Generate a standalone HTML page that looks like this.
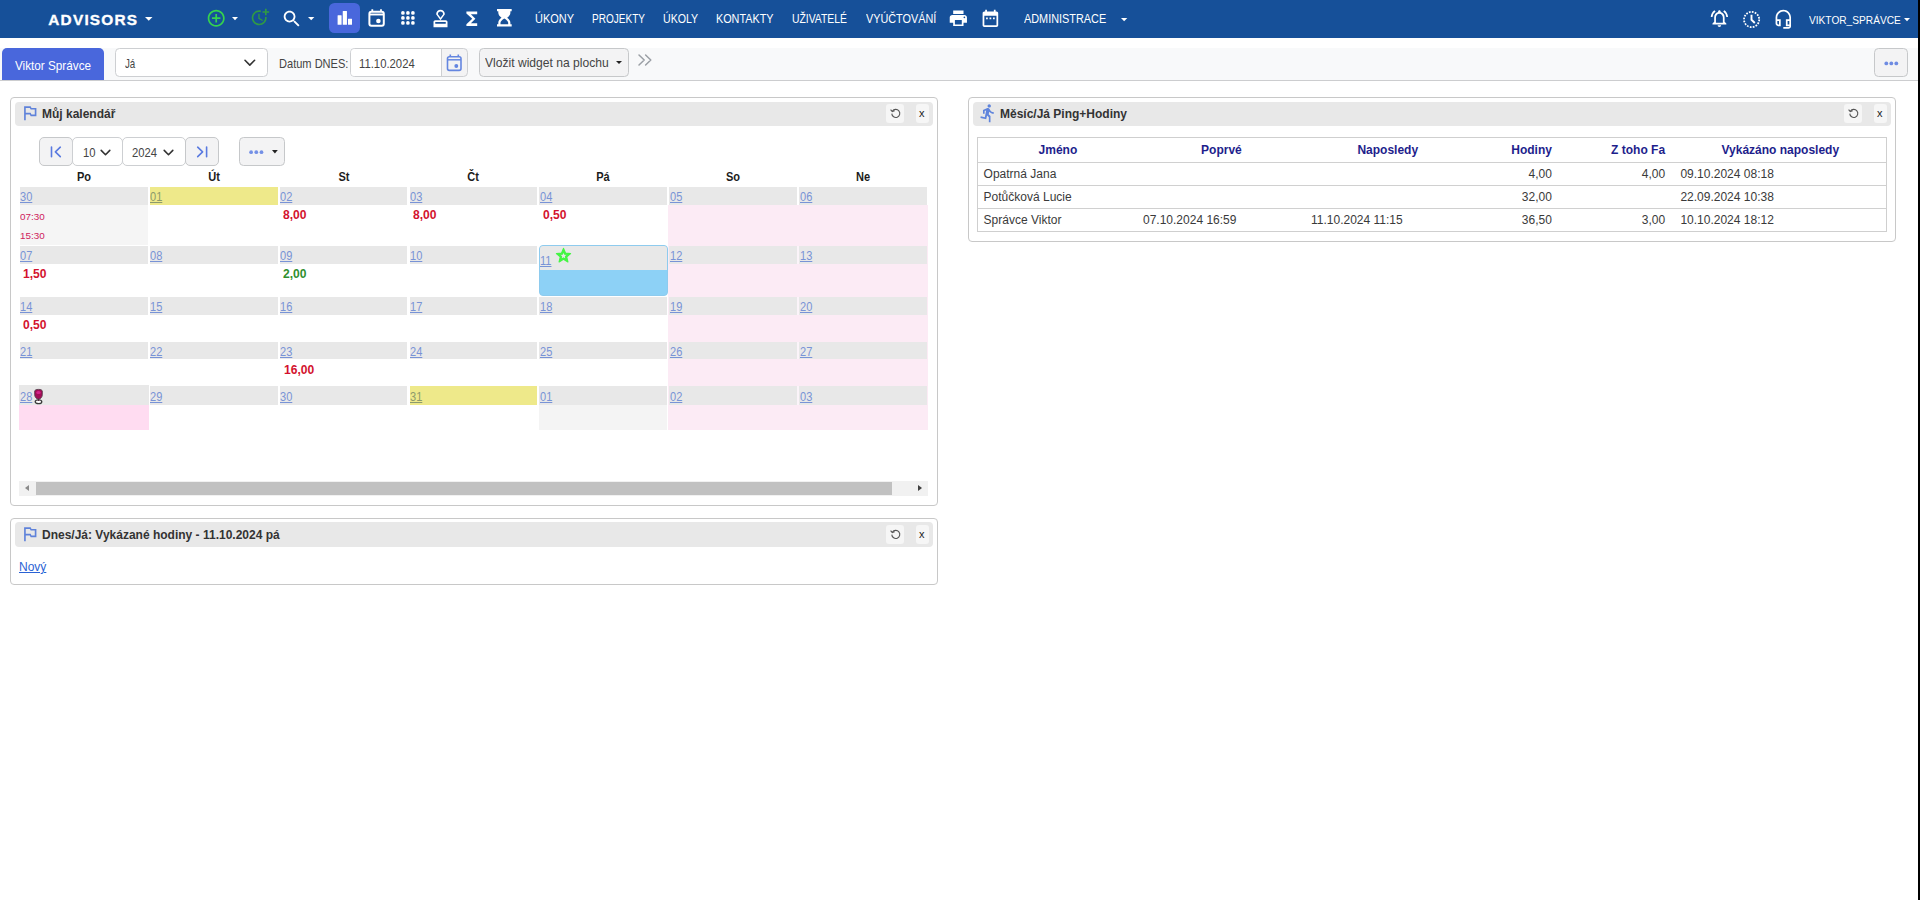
<!DOCTYPE html>
<html lang="cs">
<head>
<meta charset="utf-8">
<title>ADVISORS</title>
<style>
*{box-sizing:border-box;margin:0;padding:0}
html,body{width:1920px;height:900px;overflow:hidden;background:#fff}
body{position:relative;font-family:"Liberation Sans",sans-serif;font-size:12px;color:#212529}
.abs{position:absolute}
.t{position:absolute;white-space:nowrap;line-height:1}
svg{position:absolute;display:block;overflow:visible}
/* right black strip */
#strip{left:1918px;top:0;width:2px;height:900px;background:#000;z-index:50}
/* navbar */
#nav{left:0;top:0;width:1918px;height:38px;background:#165099}
#nav .t{color:#fff}
.brand{font-weight:bold;font-size:15.400px;letter-spacing:1.200px;-webkit-text-stroke:.35px #fff}
.mi{font-size:12px;transform-origin:0 0}
.caret{position:absolute;width:0;height:0;border-left:3.5px solid transparent;border-right:3.5px solid transparent;border-top:4px solid #fff}
#active{left:328.7px;top:3px;width:31.6px;height:29.6px;border-radius:5.500px;background:#4967dc}
/* toolbar */
#tb{left:0;top:48px;width:1918px;height:33px;background:#f8f9fa;border-bottom:1px solid #cccdcf}
#tab{left:2px;top:48.300px;width:102px;height:32px;background:#4967dc;border-radius:5px 5px 0 0}
.inp{position:absolute;background:#fff;border:1px solid #cdcfd2;border-radius:4.500px}
.btn{position:absolute;background:#f3f3f4;border:1px solid #c6c8ca;border-radius:4.500px}
.tt{font-size:12.8px;color:#444;transform-origin:0 0}
/* widgets */
.w{position:absolute;border:1px solid #c8c8c8;border-radius:4px;background:#fff}
.wh{position:absolute;background:#e8e8e8;border-radius:4px}
.wt{font-weight:bold;font-size:12px;color:#333}
.wb{position:absolute;background:#f6f6f6;border-radius:3px}
</style>
</head>
<body>
<div id="strip" class="abs"></div>

<!-- NAVBAR -->
<div id="nav" class="abs">
  <div id="active" class="abs"></div>
  <span class="t brand" style="left:48.300px;top:11.800px">ADVISORS</span>
  <span class="t mi" style="left:534.5px;top:12.5px;transform:scaleX(0.914)">ÚKONY</span>
  <span class="t mi" style="left:591.7px;top:12.5px;transform:scaleX(0.836)">PROJEKTY</span>
  <span class="t mi" style="left:662.8px;top:12.5px;transform:scaleX(0.884)">ÚKOLY</span>
  <span class="t mi" style="left:715.8px;top:12.5px;transform:scaleX(0.901)">KONTAKTY</span>
  <span class="t mi" style="left:792px;top:12.5px;transform:scaleX(0.865)">UŽIVATELÉ</span>
  <span class="t mi" style="left:866px;top:12.5px;transform:scaleX(0.903)">VYÚČTOVÁNÍ</span>
  <span class="t mi" style="left:1023.75px;top:12.5px;transform:scaleX(0.907)">ADMINISTRACE</span>
  <span class="t mi" style="left:1808.750px;top:13.700px;font-size:11.600px;transform:scaleX(.876)">VIKTOR_SPRÁVCE</span>
</div>

<!-- TOOLBAR -->
<div id="tb" class="abs"></div>
<div id="tab" class="abs"><span class="t tt" style="left:13px;top:12px;color:#fff;transform:scaleX(.916)">Viktor Správce</span></div>
<div class="inp" style="left:115px;top:48px;width:152.5px;height:28.5px"><span class="t tt" style="left:9.4px;top:8.6px;transform:scaleX(.76)">Já</span></div>
<span class="t tt" style="left:278.8px;top:57.9px;transform:scaleX(.864)">Datum DNES:</span>
<div class="inp" style="left:349.500px;top:48px;width:118.300px;height:28.500px;background:#f3f3f4"><div class="abs" style="left:0;top:0;width:91px;height:26.500px;background:#fff;border-right:1px solid #cdcfd2;border-radius:3.500px 0 0 3.500px"></div><span class="t tt" style="left:8.5px;top:8.9px;transform:scaleX(.883)">11.10.2024</span></div>
<div class="btn" style="left:478.7px;top:48px;width:150px;height:28.5px"><span class="t tt" style="left:5.7px;top:8.4px;transform:scaleX(.945)">Vložit widget na plochu</span></div>
<div class="btn" style="left:1874px;top:48px;width:33.5px;height:28.5px"></div>

<!-- WIDGET 1: calendar -->
<div class="w" style="left:10px;top:97px;width:928px;height:409px"></div>
<div class="wh" style="left:15px;top:102px;width:918px;height:24px"></div>
<span class="t wt" style="left:42px;top:108px">Můj kalendář</span>
<div class="wb" style="left:886px;top:104px;width:18px;height:19px"></div>
<div class="wb" style="left:916px;top:104px;width:13px;height:19px"></div>
<span class="t" style="left:919px;top:108px;font-size:11px;color:#222">x</span>

<!--CAL-->
<style>
.dh{position:absolute;background:#e8e8e8;height:18px}
.db{position:absolute}
.dn{font-size:12px;color:#7893d6;text-decoration:underline;text-decoration-thickness:1px;text-underline-offset:.6px;transform:scaleX(.92);transform-origin:0 0}
.wd{font-weight:bold;font-size:12px;color:#1c1c1c;transform-origin:50% 0}
.hr{font-weight:bold;font-size:12.600px;color:#d3122e;transform:scaleX(.960);transform-origin:0 0}
.tm{font-size:9.700px;color:#cf1b5c;transform:scaleX(1.020);transform-origin:0 0}
</style>
<div class="btn" style="left:39px;top:137px;width:34px;height:28.500px;border-radius:5px"></div>
<div class="inp" style="left:72px;top:137px;width:51px;height:28.500px;border-radius:5px"><span class="t tt" style="left:9.500px;top:9px;font-size:12.500px;transform:scaleX(.9);transform-origin:0 0">10</span></div>
<div class="inp" style="left:122px;top:137px;width:64px;height:28.500px;border-radius:5px"><span class="t tt" style="left:9.400px;top:9px;font-size:12.500px;transform:scaleX(.9);transform-origin:0 0">2024</span></div>
<div class="btn" style="left:185px;top:137px;width:34px;height:28.500px;border-radius:5px"></div>
<div class="btn" style="left:239px;top:137px;width:46px;height:28.500px"></div>
<span class="t wd" style="left:63.8px;top:170.500px;width:40px;text-align:center;transform:scaleX(.92)">Po</span>
<span class="t wd" style="left:193.6px;top:170.500px;width:40px;text-align:center;transform:scaleX(.92)">Út</span>
<span class="t wd" style="left:323.6px;top:170.500px;width:40px;text-align:center;transform:scaleX(.92)">St</span>
<span class="t wd" style="left:453.4px;top:170.500px;width:40px;text-align:center;transform:scaleX(.92)">Čt</span>
<span class="t wd" style="left:583.4px;top:170.500px;width:40px;text-align:center;transform:scaleX(.92)">Pá</span>
<span class="t wd" style="left:713.2px;top:170.500px;width:40px;text-align:center;transform:scaleX(.92)">So</span>
<span class="t wd" style="left:843.2px;top:170.500px;width:40px;text-align:center;transform:scaleX(.92)">Ne</span>
<div class="db" style="left:668px;top:204.8px;width:259.700px;height:225.200px;background:#fcebf5"></div>
<div class="db" style="left:19.8px;top:204.8px;width:127.9px;height:40.5px;background:#f5f5f5"></div>
<div class="dh" style="left:19.8px;top:186.8px;width:127.9px;height:18.2px;background:#e8e8e8"></div>
<span class="t dn" style="left:20.2px;top:191.0px">30</span>
<div class="dh" style="left:149.7px;top:186.8px;width:127.9px;height:18.2px;background:#eee98a"></div>
<span class="t dn" style="left:150.1px;top:191.0px;color:#8c9a6c">01</span>
<div class="dh" style="left:279.6px;top:186.8px;width:127.9px;height:18.2px;background:#e8e8e8"></div>
<span class="t dn" style="left:280.0px;top:191.0px">02</span>
<span class="t hr" style="left:282.8px;top:209.2px">8,00</span>
<div class="dh" style="left:409.5px;top:186.8px;width:127.9px;height:18.2px;background:#e8e8e8"></div>
<span class="t dn" style="left:409.9px;top:191.0px">03</span>
<span class="t hr" style="left:412.7px;top:209.2px">8,00</span>
<div class="dh" style="left:539.4px;top:186.8px;width:127.9px;height:18.2px;background:#e8e8e8"></div>
<span class="t dn" style="left:539.8px;top:191.0px">04</span>
<span class="t hr" style="left:542.6px;top:209.2px">0,50</span>
<div class="dh" style="left:669.3px;top:186.8px;width:127.9px;height:18.2px;background:#e8e8e8"></div>
<span class="t dn" style="left:669.7px;top:191.0px">05</span>
<div class="dh" style="left:799.2px;top:186.8px;width:127.9px;height:18.2px;background:#e8e8e8"></div>
<span class="t dn" style="left:799.6px;top:191.0px">06</span>
<div class="db" style="left:797px;top:246.0px;width:2px;height:17.8px;background:#fbf4f9"></div>
<div class="dh" style="left:19.8px;top:246.0px;width:127.9px;height:17.8px;background:#e8e8e8"></div>
<span class="t dn" style="left:20.2px;top:250.2px">07</span>
<span class="t hr" style="left:23.0px;top:268.4px">1,50</span>
<div class="dh" style="left:149.7px;top:246.0px;width:127.9px;height:17.8px;background:#e8e8e8"></div>
<span class="t dn" style="left:150.1px;top:250.2px">08</span>
<div class="dh" style="left:279.6px;top:246.0px;width:127.9px;height:17.8px;background:#e8e8e8"></div>
<span class="t dn" style="left:280.0px;top:250.2px">09</span>
<span class="t hr" style="left:282.8px;top:268.4px;color:#2f8f2f">2,00</span>
<div class="dh" style="left:409.5px;top:246.0px;width:127.9px;height:17.8px;background:#e8e8e8"></div>
<span class="t dn" style="left:409.9px;top:250.2px">10</span>
<div class="db" style="left:538.8px;top:244.5px;width:129.4px;height:51px;background:#8dd1f6;border-radius:4px;overflow:hidden;border:1px solid #8ecbee"><div style="height:24px;background:#e8e8e8"></div></div>
<span class="t dn" style="left:539.8px;top:254.8px">11</span>
<div class="dh" style="left:669.3px;top:246.0px;width:127.9px;height:17.8px;background:#e8e8e8"></div>
<span class="t dn" style="left:669.7px;top:250.2px">12</span>
<div class="dh" style="left:799.2px;top:246.0px;width:127.9px;height:17.8px;background:#e8e8e8"></div>
<span class="t dn" style="left:799.6px;top:250.2px">13</span>
<div class="db" style="left:797px;top:296.8px;width:2px;height:17.8px;background:#fbf4f9"></div>
<div class="dh" style="left:19.8px;top:296.8px;width:127.9px;height:17.8px;background:#e8e8e8"></div>
<span class="t dn" style="left:20.2px;top:301.0px">14</span>
<span class="t hr" style="left:23.0px;top:319.2px">0,50</span>
<div class="dh" style="left:149.7px;top:296.8px;width:127.9px;height:17.8px;background:#e8e8e8"></div>
<span class="t dn" style="left:150.1px;top:301.0px">15</span>
<div class="dh" style="left:279.6px;top:296.8px;width:127.9px;height:17.8px;background:#e8e8e8"></div>
<span class="t dn" style="left:280.0px;top:301.0px">16</span>
<div class="dh" style="left:409.5px;top:296.8px;width:127.9px;height:17.8px;background:#e8e8e8"></div>
<span class="t dn" style="left:409.9px;top:301.0px">17</span>
<div class="dh" style="left:539.4px;top:296.8px;width:127.9px;height:17.8px;background:#e8e8e8"></div>
<span class="t dn" style="left:539.8px;top:301.0px">18</span>
<div class="dh" style="left:669.3px;top:296.8px;width:127.9px;height:17.8px;background:#e8e8e8"></div>
<span class="t dn" style="left:669.7px;top:301.0px">19</span>
<div class="dh" style="left:799.2px;top:296.8px;width:127.9px;height:17.8px;background:#e8e8e8"></div>
<span class="t dn" style="left:799.6px;top:301.0px">20</span>
<div class="db" style="left:797px;top:341.8px;width:2px;height:17.6px;background:#fbf4f9"></div>
<div class="dh" style="left:19.8px;top:341.8px;width:127.9px;height:17.6px;background:#e8e8e8"></div>
<span class="t dn" style="left:20.2px;top:346.0px">21</span>
<div class="dh" style="left:149.7px;top:341.8px;width:127.9px;height:17.6px;background:#e8e8e8"></div>
<span class="t dn" style="left:150.1px;top:346.0px">22</span>
<div class="dh" style="left:279.6px;top:341.8px;width:127.9px;height:17.6px;background:#e8e8e8"></div>
<span class="t dn" style="left:280.0px;top:346.0px">23</span>
<span class="t hr" style="left:283.8px;top:364.2px">16,00</span>
<div class="dh" style="left:409.5px;top:341.8px;width:127.9px;height:17.6px;background:#e8e8e8"></div>
<span class="t dn" style="left:409.9px;top:346.0px">24</span>
<div class="dh" style="left:539.4px;top:341.8px;width:127.9px;height:17.6px;background:#e8e8e8"></div>
<span class="t dn" style="left:539.8px;top:346.0px">25</span>
<div class="dh" style="left:669.3px;top:341.8px;width:127.9px;height:17.6px;background:#e8e8e8"></div>
<span class="t dn" style="left:669.7px;top:346.0px">26</span>
<div class="dh" style="left:799.2px;top:341.8px;width:127.9px;height:17.6px;background:#e8e8e8"></div>
<span class="t dn" style="left:799.6px;top:346.0px">27</span>
<div class="db" style="left:797px;top:385.8px;width:2px;height:19.0px;background:#fbf4f9"></div>
<div class="db" style="left:19.00px;top:385.40000000000003px;width:129.70px;height:44.6px;background:#ffdcf1"></div>
<div class="dh" style="left:19.00px;top:385.40000000000003px;width:129.70px;height:19.4px;background:#e8e8e8"></div>
<span class="t dn" style="left:20.2px;top:390.7px">28</span>
<div class="dh" style="left:149.7px;top:385.8px;width:127.9px;height:19.0px;background:#e8e8e8"></div>
<span class="t dn" style="left:150.1px;top:390.7px">29</span>
<div class="dh" style="left:279.6px;top:385.8px;width:127.9px;height:19.0px;background:#e8e8e8"></div>
<span class="t dn" style="left:280.0px;top:390.7px">30</span>
<div class="dh" style="left:409.5px;top:385.8px;width:127.9px;height:19.0px;background:#eee98a"></div>
<span class="t dn" style="left:409.9px;top:390.7px;color:#8c9a6c">31</span>
<div class="db" style="left:539.4px;top:404.6px;width:127.9px;height:25.4px;background:#f4f4f4"></div>
<div class="dh" style="left:539.4px;top:385.8px;width:127.9px;height:19.0px;background:#e8e8e8"></div>
<span class="t dn" style="left:539.8px;top:390.7px">01</span>
<div class="dh" style="left:669.3px;top:385.8px;width:127.9px;height:19.0px;background:#e8e8e8"></div>
<span class="t dn" style="left:669.7px;top:390.7px">02</span>
<div class="dh" style="left:799.2px;top:385.8px;width:127.9px;height:19.0px;background:#e8e8e8"></div>
<span class="t dn" style="left:799.6px;top:390.7px">03</span>
<span class="t tm" style="left:20.2px;top:211.6px">07:30</span>
<span class="t tm" style="left:20.2px;top:230.8px">15:30</span>
<div class="abs" style="left:19px;top:481px;width:909px;height:15px;background:#f1f1f1"></div>
<div class="abs" style="left:36px;top:481.5px;width:856px;height:13px;background:#c1c1c1"></div>
<i class="abs" style="left:24.5px;top:484.5px;width:0;height:0;border-top:3.5px solid transparent;border-bottom:3.5px solid transparent;border-right:4px solid #8a8a8a"></i>
<i class="abs" style="left:917.5px;top:484.5px;width:0;height:0;border-top:3.5px solid transparent;border-bottom:3.5px solid transparent;border-left:4px solid #404040"></i>
<!--/CAL-->

<!-- WIDGET 2 -->
<div class="w" style="left:10px;top:518px;width:928px;height:67px"></div>
<div class="wh" style="left:15px;top:522px;width:918px;height:25px"></div>
<span class="t wt" style="left:42px;top:529px">Dnes/Já: Vykázané hodiny - 11.10.2024 pá</span>
<div class="wb" style="left:886px;top:525px;width:18px;height:19px"></div>
<div class="wb" style="left:916px;top:525px;width:13px;height:19px"></div>
<span class="t" style="left:919px;top:529px;font-size:11px;color:#222">x</span>
<span class="t" style="left:19px;top:561px;font-size:12px;color:#2a62d4;text-decoration:underline">Nový</span>

<!-- WIDGET 3 -->
<div class="w" style="left:968px;top:97px;width:928px;height:145px"></div>
<div class="wh" style="left:973px;top:102px;width:918px;height:24px"></div>
<span class="t wt" style="left:1000px;top:108px">Měsíc/Já Ping+Hodiny</span>
<div class="wb" style="left:1844px;top:104px;width:18px;height:19px"></div>
<div class="wb" style="left:1874px;top:104px;width:13px;height:19px"></div>
<span class="t" style="left:1877px;top:108px;font-size:11px;color:#222">x</span>

<!--TABLE-->
<style>
.th{font-weight:bold;font-size:12px;color:#1e1e8c}
.td{font-size:12px;color:#3a3a3a}
.ln{position:absolute;background:#d0d0d0}
</style>
<div class="abs" style="left:977px;top:137px;width:910px;height:95px;border:1px solid #cfcfcf"></div>
<div class="ln" style="left:978px;top:162px;width:908px;height:1px"></div>
<div class="ln" style="left:978px;top:185px;width:908px;height:1px"></div>
<div class="ln" style="left:978px;top:208px;width:908px;height:1px"></div>
<span class="t th" style="left:957.9000000000001px;top:143.6px;width:200px;text-align:center">Jméno</span>
<span class="t th" style="left:1121.4px;top:143.6px;width:200px;text-align:center">Poprvé</span>
<span class="t th" style="left:1287.75px;top:143.6px;width:200px;text-align:center">Naposledy</span>
<span class="t th" style="left:1351.9px;top:143.6px;width:200px;text-align:right">Hodiny</span>
<span class="t th" style="left:1465.1px;top:143.6px;width:200px;text-align:right">Z toho Fa</span>
<span class="t th" style="left:1680.3px;top:143.6px;width:200px;text-align:center">Vykázáno naposledy</span>
<span class="t td" style="left:983.6px;top:167.7px">Opatrná Jana</span>
<span class="t td" style="left:1351.9px;top:167.7px;width:200px;text-align:right">4,00</span>
<span class="t td" style="left:1465.1px;top:167.7px;width:200px;text-align:right">4,00</span>
<span class="t td" style="left:1680.4px;top:167.7px">09.10.2024 08:18</span>
<span class="t td" style="left:983.6px;top:190.6px">Potůčková Lucie</span>
<span class="t td" style="left:1351.9px;top:190.6px;width:200px;text-align:right">32,00</span>
<span class="t td" style="left:1680.4px;top:190.6px">22.09.2024 10:38</span>
<span class="t td" style="left:983.6px;top:213.6px">Správce Viktor</span>
<span class="t td" style="left:1143px;top:213.6px">07.10.2024 16:59</span>
<span class="t td" style="left:1311px;top:213.6px">11.10.2024 11:15</span>
<span class="t td" style="left:1351.9px;top:213.6px;width:200px;text-align:right">36,50</span>
<span class="t td" style="left:1465.1px;top:213.6px;width:200px;text-align:right">3,00</span>
<span class="t td" style="left:1680.4px;top:213.6px">10.10.2024 18:12</span>
<!--/TABLE-->

<!--ICONS-->
<!-- navbar icons (24-unit viewBox) -->
<svg style="left:205.500px;top:7.500px" width="20.4" height="20.4" viewBox="0 0 24 24" fill="#35d24e"><path d="M13 7h-2v4H7v2h4v4h2v-4h4v-2h-4V7zm-1-5C6.48 2 2 6.48 2 12s4.48 10 10 10 10-4.48 10-10S17.52 2 12 2zm0 18c-4.41 0-8-3.59-8-8s3.59-8 8-8 8 3.59 8 8-3.59 8-8 8z"/></svg>
<svg style="left:250.200px;top:6.900px" width="20" height="20" viewBox="0 0 24 24" fill="#2f9a44"><path d="M10 8v6l4.7 2.9.8-1.2-4-2.4V8z"/><path d="M17.92 12c.05.33.08.66.08 1 0 3.9-3.1 7-7 7s-7-3.1-7-7 3.1-7 7-7c.7 0 1.37.1 2 .29V4.23c-.64-.15-1.31-.23-2-.23-5 0-9 4-9 9s4 9 9 9 9-4 9-9c0-.34-.02-.67-.06-1h-2.020z"/><path d="M20 5V2h-2v3h-3v2h3v3h2V7h3V5z"/></svg>
<svg style="left:281.200px;top:7.700px" width="21.7" height="21.7" viewBox="0 0 24 24" fill="#fff"><path d="M15.5 14h-.79l-.28-.27C15.41 12.590 16 11.110 16 9.500 16 5.910 13.090 3 9.500 3S3 5.910 3 9.500 5.910 16 9.500 16c1.610 0 3.090-.59 4.230-1.570l.27.280v.790l5 4.990L20.490 19l-4.990-5zm-6 0C7.010 14 5 11.990 5 9.500S7.010 5 9.500 5 14 7.010 14 9.500 11.990 14 9.500 14z"/></svg>
<svg style="left:337px;top:10px" width="15.500" height="15.500" viewBox="0 0 15.500 15.500" fill="#fff"><rect x=".6" y="5.300" width="4" height="9.500" rx=".4"/><rect x="5.750" y=".9" width="4.200" height="13.900" rx=".4"/><rect x="11" y="8.700" width="4" height="6.100" rx=".4"/></svg>
<svg style="left:368px;top:9px" width="17.200" height="18" viewBox="0 0 17.200 18" fill="none" stroke="#fff"><rect x="1.400" y="2.700" width="14.400" height="14.100" rx="2" stroke-width="2"/><path d="M1.400 5.500h14.400" stroke-width="1.900"/><path d="M4.300 .2v2.500M13 .2v2.500" stroke-width="1.800"/><circle cx="10.400" cy="12" r="2.300" fill="#fff" stroke="none"/></svg>
<svg style="left:401.2px;top:11px" width="14.500" height="14.500" viewBox="0 0 14.500 14.500" fill="#fff"><circle cx="1.9" cy="1.9" r="1.850"/><circle cx="6.9" cy="1.9" r="1.850"/><circle cx="11.9" cy="1.9" r="1.850"/><circle cx="1.9" cy="6.9" r="1.850"/><circle cx="6.9" cy="6.9" r="1.850"/><circle cx="11.9" cy="6.9" r="1.850"/><circle cx="1.9" cy="11.9" r="1.850"/><circle cx="6.9" cy="11.9" r="1.850"/><circle cx="11.9" cy="11.9" r="1.850"/></svg>
<svg style="left:429.8px;top:7.95px" width="21" height="21" viewBox="0 0 24 24" fill="#fff"><path d="M4 16v6h16v-6c0-1.100-.9-2-2-2H6c-1.100 0-2 .9-2 2zm14 2H6v-2h12v2zM12 2C9.240 2 7 4.240 7 7l5 7 5-7c0-2.760-2.240-5-5-5zm0 9L9 7c0-1.660 1.340-3 3-3s3 1.340 3 3l-3 4z"/></svg>
<svg style="left:460.9px;top:7.7px" width="21.6" height="21.6" viewBox="0 0 24 24" fill="#fff"><path d="M18 4H6v2l6.500 6L6 18v2h12v-3h-7l5-5-5-5h7V4z"/></svg>
<svg style="left:497px;top:9.2px" width="14.7" height="17.5" viewBox="0 0 14.7 17.5" fill="#fff"><path d="M0 0h14.700v2.200h-1.300v1.600c0 1.900-1.300 3.500-3.200 4.950 1.900 1.450 3.200 3.050 3.200 4.950v1.600h1.300v2.200H0v-2.200h1.300v-1.600c0-1.900 1.300-3.500 3.200-4.950C2.600 7.300 1.300 5.700 1.300 3.800V2.200H0zM3.500 15.300h7.700v-1.500c0-1.300-1.500-2.800-3.850-4.200C5 11 3.500 12.500 3.500 13.800z"/></svg>
<svg style="left:948.1px;top:7.8px" width="20.7" height="20.7" viewBox="0 0 24 24" fill="#fff"><path d="M19 8H5c-1.660 0-3 1.340-3 3v6h4v4h12v-4h4v-6c0-1.660-1.340-3-3-3zm-3 11H8v-5h8v5zm3-7c-.55 0-1-.45-1-1s.45-1 1-1 1 .45 1 1-.45 1-1 1zm-1-9H6v4h12V3z"/></svg>
<svg style="left:980.1px;top:7.7px" width="20.8" height="20.8" viewBox="0 0 24 24" fill="#fff"><path d="M9 11H7v2h2v-2zm4 0h-2v2h2v-2zm4 0h-2v2h2v-2zm2-7h-1V2h-2v2H8V2H6v2H5c-1.110 0-1.990.9-1.990 2L3 20c0 1.100.89 2 2 2h14c1.100 0 2-.9 2-2V6c0-1.100-.9-2-2-2zm0 16H5V9h14v11z"/></svg>
<!-- carets -->
<svg style="left:145px;top:16.7px" width="7.5" height="3.8" viewBox="0 0 7.5 3.8" fill="#fff"><path d="M0 0h7.5l-3.75 3.8z"/></svg>
<svg style="left:232.1px;top:16.7px" width="6" height="3.2" viewBox="0 0 6 3.2" fill="#fff"><path d="M0 0h6l-3.0 3.2z"/></svg>
<svg style="left:308.3px;top:16.7px" width="6.4" height="3.2" viewBox="0 0 6.4 3.2" fill="#fff"><path d="M0 0h6.4l-3.2 3.2z"/></svg>
<svg style="left:1120.6px;top:17.5px" width="6.3" height="3.3" viewBox="0 0 6.3 3.3" fill="#fff"><path d="M0 0h6.3l-3.15 3.3z"/></svg>
<svg style="left:1903.8px;top:17.8px" width="6" height="3.3" viewBox="0 0 6 3.3" fill="#fff"><path d="M0 0h6l-3.0 3.3z"/></svg>
<svg style="left:616.4px;top:61.1px" width="6" height="2.9" viewBox="0 0 6 2.9" fill="#222"><path d="M0 0h6l-3.0 2.9z"/></svg>
<svg style="left:271.8px;top:150px" width="5.8" height="3.4" viewBox="0 0 5.8 3.4" fill="#222"><path d="M0 0h5.8l-2.9 3.4z"/></svg>
<!--/NAVICONS-->
<!-- right navbar icons -->
<svg style="left:1709.2px;top:8.1px" width="20.8" height="20.8" viewBox="0 0 24 24" fill="#fff"><path d="M12 22c1.100 0 2-.9 2-2h-4c0 1.100.9 2 2 2zm6-6v-5c0-3.070-1.630-5.640-4.500-6.320V4c0-.83-.67-1.500-1.500-1.500s-1.500.67-1.500 1.500v.68C7.640 5.360 6 7.920 6 11v5l-2 2v1h16v-1l-2-2zm-2 1H8v-6c0-2.480 1.510-4.500 4-4.500s4 2.020 4 4.500v6zM7.580 4.080L6.150 2.650C3.750 4.480 2.170 7.300 2.030 10.500h2a8.445 8.445 0 0 1 3.550-6.420zm12.390 6.420h2c-.15-3.200-1.730-6.020-4.120-7.850l-1.420 1.430a8.495 8.495 0 0 1 3.540 6.420z"/></svg>
<svg style="left:1742px;top:9.5px" width="19" height="19" viewBox="0 0 19 19" fill="none" stroke="#fff"><circle cx="9.6" cy="9.500" r="7.600" stroke-width="1.800" stroke-dasharray="1.750 1.235"/><path d="M9.500 4.800v5l3.300 3.200" stroke-width="1.900"/></svg>
<svg style="left:1773.2px;top:9.4px" width="20.6" height="20.6" viewBox="0 0 24 24" fill="#fff"><path d="M19 14v4h-2v-4h2M7 14v4H6c-.55 0-1-.45-1-1v-3h2m5-13c-4.970 0-9 4.030-9 9v7c0 1.660 1.340 3 3 3h3v-8H5v-2c0-3.870 3.130-7 7-7s7 3.130 7 7v2h-4v8h4v1h-7v2h6c1.660 0 3-1.340 3-3V10c0-4.970-4.030-9-9-9z"/></svg>
<!-- toolbar icons -->
<svg style="left:244px;top:59px" width="12" height="8" viewBox="0 0 12 8" fill="none" stroke="#333" stroke-width="1.600" stroke-linecap="round" stroke-linejoin="round"><path d="M1 1.300l4.800 4.800 4.800-4.800"/></svg>
<svg style="left:446px;top:54px" width="16.500" height="17.500" viewBox="0 0 16.500 17.500" fill="none" stroke="#6486e0"><rect x="1.500" y="2.700" width="13.500" height="13.700" rx="1.800" stroke-width="1.600"/><path d="M1.500 5.800h13.500" stroke-width="1.500"/><path d="M4.300 .4v2.300M12.300 .4v2.300" stroke-width="1.600"/><circle cx="10.300" cy="12" r="1.950" fill="#6486e0" stroke="none"/></svg>
<svg style="left:638px;top:54px" width="14" height="12" viewBox="0 0 14 12" fill="none" stroke="#9a9fa5" stroke-width="1.500" stroke-linecap="round" stroke-linejoin="round"><path d="M1 1l5.200 5L1 11M7.600 1l5.200 5-5.200 5"/></svg>
<svg style="left:1884px;top:60.500px" width="15" height="5" viewBox="0 0 15 5" fill="#6e8be2"><circle cx="2.300" cy="2.400" r="1.900"/><circle cx="7.300" cy="2.400" r="1.900"/><circle cx="12.300" cy="2.400" r="1.900"/></svg>
<!-- widget header icons -->
<svg style="left:19.5px;top:102.8px" width="19.700" height="19.700" viewBox="0 0 24 24" fill="#5f82da"><path d="M14 6l-1-2H5v17h2v-7h5l1 2h7V6h-6zm4 8h-4l-1-2H7V6h5l1 2h5v6z"/></svg>
<svg style="left:19.5px;top:523.6px" width="19.700" height="19.700" viewBox="0 0 24 24" fill="#5f82da"><path d="M14 6l-1-2H5v17h2v-7h5l1 2h7V6h-6zm4 8h-4l-1-2H7V6h5l1 2h5v6z"/></svg>
<svg style="left:977.5px;top:102.8px" width="20" height="20" viewBox="0 0 24 24" fill="#5f84dc"><path d="M13.490 5.480c1.100 0 2-.9 2-2s-.9-2-2-2-2 .9-2 2 .9 2 2 2zm-3.600 13.900l1-4.400 2.100 2v6h2v-7.500l-2.100-2 .6-3c1.300 1.500 3.300 2.500 5.500 2.500v-2c-1.900 0-3.500-1-4.300-2.400l-1-1.600c-.4-.6-1-1-1.700-1-.3 0-.5.100-.8.100l-5.200 2.200v4.700h2v-3.400l1.800-.7-1.600 8.100-4.900-1-.4 2 7 1.400z"/></svg>
<!-- refresh icons -->
<svg style="left:889.5px;top:107.500px" width="11" height="11" viewBox="0 0 11 11" fill="none" stroke="#555" stroke-width="1.100"><path d="M2.400 3.300A4 4 0 1 1 1.800 5.600"/><path d="M.6 1.600l1.700 2 2.300-.9" stroke-linejoin="round"/></svg>
<svg style="left:889.5px;top:528.500px" width="11" height="11" viewBox="0 0 11 11" fill="none" stroke="#555" stroke-width="1.100"><path d="M2.400 3.300A4 4 0 1 1 1.800 5.600"/><path d="M.6 1.600l1.700 2 2.300-.9" stroke-linejoin="round"/></svg>
<svg style="left:1847.500px;top:107.500px" width="11" height="11" viewBox="0 0 11 11" fill="none" stroke="#555" stroke-width="1.100"><path d="M2.400 3.300A4 4 0 1 1 1.800 5.600"/><path d="M.6 1.600l1.700 2 2.300-.9" stroke-linejoin="round"/></svg>
<!-- calendar nav icons -->
<svg style="left:50px;top:146px" width="12" height="12" viewBox="0 0 12 12" fill="none" stroke="#5a7ae0" stroke-width="1.600" stroke-linecap="round" stroke-linejoin="round"><path d="M1.500 1v9.800M10.300 1.200L5.400 5.900l4.900 4.700"/></svg>
<svg style="left:196px;top:146px" width="12" height="12" viewBox="0 0 12 12" fill="none" stroke="#5a7ae0" stroke-width="1.600" stroke-linecap="round" stroke-linejoin="round"><path d="M10.600 1v9.800M1.700 1.200l4.900 4.700-4.900 4.700"/></svg>
<svg style="left:99.500px;top:148.800px" width="12" height="8" viewBox="0 0 12 8" fill="none" stroke="#333" stroke-width="1.600" stroke-linecap="round" stroke-linejoin="round"><path d="M1.200 1.400l4.300 4.300 4.300-4.300"/></svg>
<svg style="left:162.500px;top:148.800px" width="12" height="8" viewBox="0 0 12 8" fill="none" stroke="#333" stroke-width="1.600" stroke-linecap="round" stroke-linejoin="round"><path d="M1.200 1.400l4.300 4.300 4.300-4.300"/></svg>
<svg style="left:248.500px;top:149.600px" width="15" height="4.400" viewBox="0 0 15 4.400" fill="#7490e6"><circle cx="2.100" cy="2.200" r="1.850"/><circle cx="7.300" cy="2.200" r="1.850"/><circle cx="12.500" cy="2.200" r="1.850"/></svg>
<!-- star (today) -->
<svg style="left:554.800px;top:247.200px" width="17" height="17" viewBox="0 0 24 24" fill="#45f545" stroke="#45f545" stroke-width="1.700" stroke-linejoin="round"><path d="M22 9.240l-7.190-.62L12 2 9.190 8.630 2 9.240l5.460 4.730L5.820 21 12 17.270 18.180 21l-1.630-7.030L22 9.240zM12 15.400l-3.760 2.270 1-4.280-3.320-2.880 4.380-.38L12 6.100l1.710 4.040 4.380.38-3.320 2.880 1 4.280L12 15.400z"/></svg>
<!-- wine glass -->
<svg style="left:33.500px;top:388.500px" width="9" height="15.500" viewBox="0 0 9 15.500"><ellipse cx="4.500" cy="12.800" rx="3.300" ry="1.900" fill="#fff" stroke="#3a3a3a" stroke-width="1.300"/><path d="M4.500 9v3" stroke="#5a2a40" stroke-width="1.200"/><path d="M.7 2.200C.7.900 2.400.4 4.500.4s3.800.5 3.800 1.800v3.600c0 2.200-1.700 4.300-3.800 4.300S.7 8 .7 5.800z" fill="#a30e58" stroke="#4a3340" stroke-width=".8"/><ellipse cx="4.500" cy="3.600" rx="2.300" ry="1.500" fill="#d4258a"/></svg>
<!--/ICONS2-->
</body>
</html>
